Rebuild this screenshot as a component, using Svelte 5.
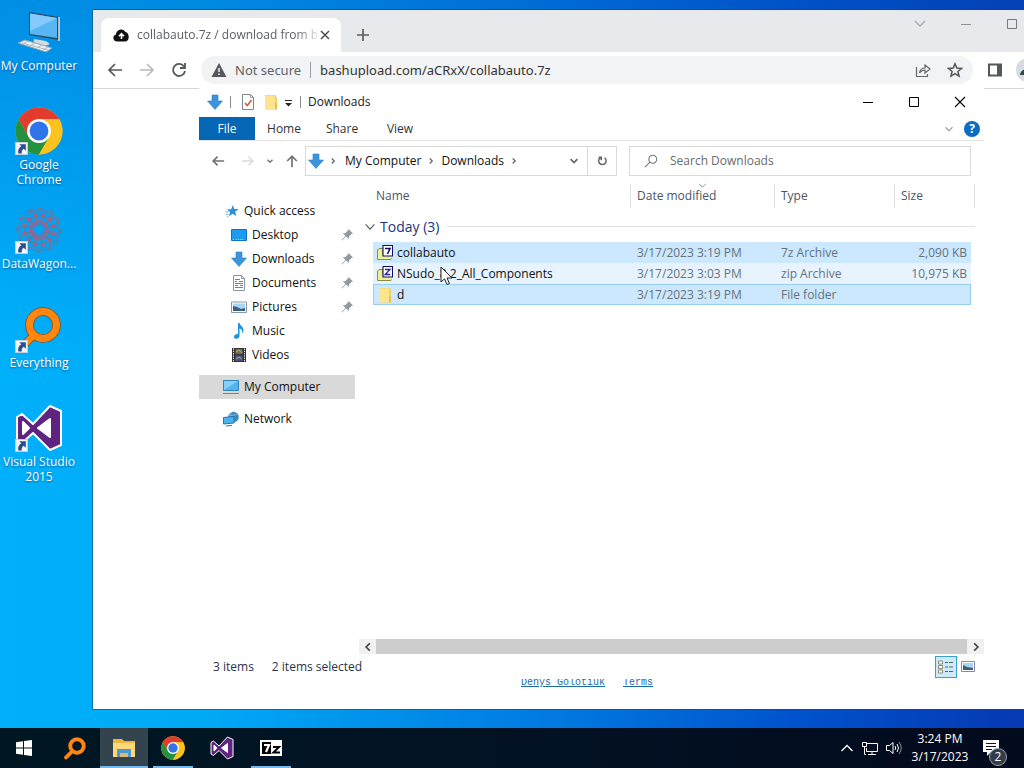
<script>
  const places = [
    { name: 'Desktop', icon: 'desktop', pinned: true },
    { name: 'Downloads', icon: 'down', pinned: true },
    { name: 'Documents', icon: 'doc', pinned: true },
    { name: 'Pictures', icon: 'picture', pinned: true },
    { name: 'Music', icon: 'music', pinned: false },
    { name: 'Videos', icon: 'video', pinned: false }
  ];
  const files = [
    { name: 'collabauto', icon: 'seven', date: '3/17/2023 3:19 PM', type: '7z Archive', size: '2,090 KB', state: 'selected' },
    { name: 'NSudo_8.2_All_Components', icon: 'zip', date: '3/17/2023 3:03 PM', type: 'zip Archive', size: '10,975 KB', state: 'hover' },
    { name: 'd', icon: 'folder', date: '3/17/2023 3:19 PM', type: 'File folder', size: '', state: 'selected focused' }
  ];
  const shortcuts = [
    { name: 'My Computer', icon: 'bigpc', link: false },
    { name: 'Google Chrome', icon: 'chrome', link: true },
    { name: 'DataWagon...', icon: 'wagon', link: true },
    { name: 'Everything', icon: 'every', link: true },
    { name: 'Visual Studio 2015', icon: 'vs', link: true }
  ];
  const tasks = [
    { name: 'Start', icon: 'start', state: '' },
    { name: 'Everything', icon: 'every', state: '' },
    { name: 'File Explorer', icon: 'explorer', state: 'active' },
    { name: 'Google Chrome', icon: 'chrome', state: 'open' },
    { name: 'Visual Studio', icon: 'vs', state: '' },
    { name: '7-Zip', icon: 'sevenzip', state: 'open' }
  ];
  const petals = [0, 30, 60, 90, 120, 150, 180, 210, 240, 270, 300, 330];
</script>

{#snippet icon(name, size)}
  {#if name === 'down'}
    <svg width={size} height={size} viewBox="0 0 16 16"><path d="M5 1h6v6h4.5L8 15.5.5 7H5z" fill="#3a95dd" stroke="#2b7fc4" stroke-width=".6" /></svg>
  {:else if name === 'folder'}
    <svg width={size} height={size} viewBox="0 0 16 16"><path d="M2 1h11v2h1v12.500H2z" fill="#f4cf62" /><path d="M3 1.500h9V15H2V1.500z" fill="#ffe48f" /><path d="M12 9l2 1v5.500h-2z" fill="#e9bf4f" /></svg>
  {:else if name === 'chrome'}
    <svg width={size} height={size} viewBox="0 0 48 48">
      <circle cx="24" cy="24" r="23.500" fill="#fcc31e" />
      <path d="M24 24 13.800 29.900 3.650 12.250A23.500 23.500 0 0 1 44.350 12.250L24 12.250z" fill="#e33b2e" />
      <path d="M3.650 12.250 13.800 29.900 24 35.750 34.200 29.900 24 47.500A23.500 23.500 0 0 1 3.650 12.250z" fill="#23913f" />
      <path d="M24 12.250h20.350A23.500 23.500 0 0 1 24 47.500l10.200-17.600z" fill="#fcc31e" />
      <circle cx="24" cy="24" r="12" fill="#fff" /><circle cx="24" cy="24" r="9.400" fill="#2f74e8" />
    </svg>
  {:else if name === 'vs'}
    <svg width={size} height={size} viewBox="0 0 48 48"><path fill-rule="evenodd" d="M2 13 7 10l11 10L35 2l11 5v34l-11 5-17-17L7 39l-5-3z M8 18v12l6-6z M35 15v18L23 24z" fill="#5e2480" stroke="#fff" stroke-width="2" stroke-linejoin="round" /><path d="M8 18v12l6-6zM35 15v18L23 24z" fill="#fff" /></svg>
  {:else if name === 'every'}
    <svg width={size} height={size} viewBox="0 0 48 48"><g fill="none" stroke-linecap="round"><path d="M18 31 6 43" stroke="#8a4b12" stroke-width="8" /><circle cx="28" cy="20" r="13.500" stroke="#8a4b12" stroke-width="8.500" /><path d="M19 30 6 43" stroke="#ff8610" stroke-width="6.500" /><circle cx="28" cy="20" r="13.500" stroke="#ff8610" stroke-width="7" /></g></svg>
  {:else if name === 'wagon'}
    <svg width={size} height={size} viewBox="0 0 48 48"><g fill="none" stroke="#66799f" stroke-width="1.200">
      {#each petals as a}<g transform="rotate({a} 24 24)"><path d="M24 19 19 10l5-8.500 5 8.500zM19 10h10M24 1.500 31 5" /></g>{/each}
      {#each petals as a}<circle cx="24" cy="9" r="1" fill="#c0567c" stroke="#c0567c" transform="rotate({a + 15} 24 24)" /><circle cx="24" cy="15" r=".8" stroke="#b85a83" transform="rotate({a} 24 24)" />{/each}
      <circle cx="24" cy="24" r="7" stroke="#a85f8d" stroke-dasharray="2 1" /></g></svg>
  {:else if name === 'bigpc'}
    <svg width={size} height={size} viewBox="0 0 48 48"><path d="M19 31 31 33l4 3-7 3-10-2z" fill="#cfdce5" /><path d="M14 4 44 9v23L14 27z" fill="#2a4a63" /><path d="M15 5.500 42 10v20L15 26z" fill="#59b6f4" /><path d="M15 5.500 42 10 15 23z" fill="#83cbfb" /><path d="M44 9v24" stroke="#d5e5ee" stroke-width="1.500" /><path d="M3 35 10 32l27 8-6 4z" fill="#eef0f1" stroke="#93a5b2" /><path d="m7 35 26 7M13 33l-5 3M20 35l-5 3M27 37l-5 3M33 39l-5 3" stroke="#b0bcc4" /></svg>
  {:else if name === 'pc'}
    <svg width={size} height={size} viewBox="0 0 16 16"><path d="M.5 1.500h15v10H.5z" fill="#4fb5f0" stroke="#3184b8" /><path d="M1 2h14L1 11z" fill="#85d0fa" /><path d="M0 14.500h16" stroke="#4b8fb8" /></svg>
  {:else if name === 'desktop'}
    <svg width={size} height={size} viewBox="0 0 16 16"><path d="M.5 2.500h15v11H.5z" fill="#1c9bf0" stroke="#0d75c4" /><path d="M2 12.500h2m1 0h8" stroke="#b9e1fb" stroke-dasharray="1 1" /></svg>
  {:else if name === 'doc'}
    <svg width={size} height={size} viewBox="0 0 16 16"><path d="M2.500.5h8l3 3v12h-11z" fill="#fff" stroke="#8a98a3" /><path d="M10.500.5v3h3" fill="none" stroke="#8a98a3" /><path d="M4 4.500h5M4 6.500h2m2 0h4M4 8.500h8M4 10.500h3m2 0h3M4 12.500h8" stroke="#3f8cc9" /></svg>
  {:else if name === 'picture'}
    <svg width={size} height={size} viewBox="0 0 16 16"><path d="M.5 3h15v10.500H.5z" fill="#fff" stroke="#8a98a3" /><path d="M2 4.500h12V12H2z" fill="#a9d7f3" /><path d="M2 12V7l4 1 4 2 4-1v3z" fill="#39607c" /></svg>
  {:else if name === 'music'}
    <svg width={size} height={size} viewBox="0 0 16 16"><path d="M7 0h1.500c.4 3 4 3.500 4 7 0 1.500-.6 2.500-1.300 3.400.5-3-.7-4.400-2.700-5V13c0 1.600-1.500 2.700-3.200 2.700S3 14.800 3 13.400 4.500 11 7 11z" fill="#1c94dd" /></svg>
  {:else if name === 'video'}
    <svg width={size} height={size} viewBox="0 0 16 16"><path d="M1 1h14v14H1z" fill="#333" /><path d="M2.500 1.500v13M13.500 1.500v13" stroke="#eee" stroke-dasharray="1.300 1" /><path d="M4.500 2h7v5h-7z" fill="#6e7454" /><path d="M4.500 8.500h7v5.500h-7z" fill="#49578f" /><path d="m5 5 3-2 3 3M5 12l3-2 3 2" stroke="#b5aa6c" fill="none" /></svg>
  {:else if name === 'network'}
    <svg width={size} height={size} viewBox="0 0 16 16"><circle cx="10.500" cy="6" r="5.300" fill="#3d88bd" /><path d="M9 1c-3 4-2 8 1 10M6 4c3 1 6 0 8-1" fill="none" stroke="#8cc8ec" stroke-width=".8" /><path d="M.5 6.500 11 5.500v6.500l-10.500 1z" fill="#49b2ef" stroke="#2475ad" /><path d="M3 15l6-.5" stroke="#2475ad" /></svg>
  {:else if name === 'star'}
    <svg width={size} height={size} viewBox="0 0 16 16"><path d="m9 1 1.600 4.600 5 .1-4 3.200 1.300 4.900-4.200-2.700L4.500 14l1.400-4.800L2 6.200l5-.3z" fill="#2d8fd8" /><path d="M0 9h4M1 12h3M2 14.500h2" stroke="#62b4ea" /></svg>
  {:else if name === 'seven' || name === 'zip'}
    <svg width={size} height={size} viewBox="0 0 16 16"><path d="M.5 5 2 3.500h4V13l8-.2V14.500H.5z" fill="#e7ec7c" stroke="#8b8c42" /><path d="M4 10h10v4H1V5h3z" fill="#edf19a" /><path d="M6 .5h9.500v10.500H6z" fill="#fff" stroke="#10105e" stroke-width="1.100" />
      {#if name === 'seven'}<path d="M8 3.500h5L10.500 9" fill="none" stroke="#10105e" stroke-width="1.600" />{:else}<path d="M8 3.500h5L8.200 8.500h5" fill="none" stroke="#2222b8" stroke-width="1.300" />{/if}
    </svg>
  {:else if name === 'start'}
    <svg width={size} height={size} viewBox="0 0 24 24"><path d="M4 6.300 11 5.200V11.500H4zM12 5 20 4v7.500h-8zM4 12.500h7v6.300L4 17.800zM12 12.500h8V20l-8-1z" fill="#fff" /></svg>
  {:else if name === 'explorer'}
    <svg width={size} height={size} viewBox="0 0 24 24"><path d="M1 3h9l2 2h11v16H1z" fill="#eeb541" /><path d="M1 7h22v14H1z" fill="#ffd978" /><path d="M5 13h14v8h-3v-4H8v4H5z" fill="#4a9bd4" /><path d="M8 17h8v4H8z" fill="#dcb975" /></svg>
  {:else if name === 'sevenzip'}
    <svg width={size} height={size} viewBox="0 0 24 24"><path d="M1 4h22v16H1z" fill="#fff" /><path d="M3 6h9v12H3z" fill="#000" /><path d="M5 9h5l-3 7" fill="none" stroke="#fff" stroke-width="2.200" /><path d="M14 11h6l-5.500 5.500H21" fill="none" stroke="#000" stroke-width="2" /></svg>
  {/if}
{/snippet}

{#snippet stroke(d, size, color, width)}
  <svg width={size} height={size} viewBox="0 0 16 16" fill="none" stroke={color} stroke-width={width}><path {d} /></svg>
{/snippet}

<div class="desktop">
  <nav class="shortcuts" aria-label="Desktop">
    {#each shortcuts as s}
      <a href="#top" class="shortcut">
        <span class="pic">
          {@render icon(s.icon, 48)}
          {#if s.link}
            <svg class="badge" width="13" height="13" viewBox="0 0 12 12"><path d="M.5.5h11v11H.5z" fill="#f5f7fa" stroke="#c3cfda" /><path d="M4 2h6v6L8 6.300C6.500 7.500 6 8.500 6.300 10.500H3C2.500 7.500 3.500 5.500 5.800 4z" fill="#2c4f93" /></svg>
          {/if}
        </span>
        <span class="label">{s.name}</span>
      </a>
    {/each}
  </nav>

  <section class="browser" aria-label="Browser">
    <header class="tabs">
      <div class="tab">
        <svg width="17" height="17" viewBox="0 0 17 17"><path d="M4.500 14.500C-1 14.500-.5 8 3 7.500 3 3 9.500 0 12.500 5c4 .2 4.500 9.500 0 9.500z" fill="#111" /><path d="M8.500 12V7M6 9.200l2.500-2.500L11 9.200" fill="none" stroke="#fff" stroke-width="1.600" /></svg>
        <span class="tabtext">collabauto.7z / download from b</span>
        <button aria-label="Close tab">{@render stroke('M4 4l8 8M12 4l-8 8', 16, '#4a4d51', 1.5)}</button>
      </div>
      <button class="plus" aria-label="New tab">{@render stroke('M8 2v12M2 8h12', 16, '#5a5d61', 1.7)}</button>
      <div class="controls">
        <button aria-label="Search tabs">{@render stroke('M3 5l5 5 5-5', 16, '#a8a9ac', 1.3)}</button>
        <button aria-label="Minimize">{@render stroke('M3 8.500h10', 16, '#8e9093', 1)}</button>
        <button aria-label="Maximize">{@render stroke('M3.500 3.500h9v9h-9z', 16, '#77797c', 1)}</button>
      </div>
    </header>
    <div class="toolbar">
      <button aria-label="Back">{@render stroke('M15 8H2M8 2L2 8l6 6', 16, '#54575b', 1.7)}</button>
      <button aria-label="Forward">{@render stroke('M1 8h13M8 2l6 6-6 6', 16, '#b9bbbe', 1.7)}</button>
      <button aria-label="Reload">{@render stroke('M13 4.500A6 6 0 1 0 14 9M14 1v5H9', 16, '#54575b', 1.8)}</button>
      <div class="omnibox">
        <svg width="16" height="16" viewBox="0 0 16 16"><path d="M8 1 15.500 15H.5z" fill="#54575b" /><path d="M8 6v4M8 11.500v1.500" stroke="#f1f3f4" stroke-width="1.500" /></svg>
        <span class="secure">Not secure</span>
        <input aria-label="Address" value="bashupload.com/aCRxX/collabauto.7z" />
        <button aria-label="Share">{@render stroke('M1.500 5v9.500h11V12M4.500 11C5 7.500 7 6 10 6V3l5 4-5 4V8C8 8 6 9 4.500 11z', 16, '#64676b', 1.2)}</button>
        <button aria-label="Bookmark">{@render stroke('M8 1.800l1.800 4.300 4.700.4-3.600 3 1.200 4.600L8 11.700l-4.100 2.400 1.200-4.600-3.600-3 4.700-.4z', 16, '#54575b', 1.5)}</button>
      </div>
      <button aria-label="Side panel"><svg width="16" height="16" viewBox="0 0 16 16"><path d="M2 2.500h12v11H2z" fill="none" stroke="#54575b" stroke-width="2" /><path d="M10 2h4v12h-4z" fill="#54575b" /></svg></button>
      <button class="avatar" aria-label="Profile"><svg width="24" height="24" viewBox="0 0 24 24"><circle cx="12" cy="12" r="12" fill="#d3dce0" /><path d="M4 17c0-8 16-8 16 0z" fill="#33474f" /><circle cx="13" cy="8" r="4" fill="#33474f" /></svg></button>
    </div>
    <div class="page">
      <footer><a href="#author">Denys Golotiuk</a><a href="#terms">Terms</a></footer>
    </div>
  </section>

  <section class="explorer" aria-label="Downloads">
    <header class="title">
      {@render icon('down', 16)}
      <i class="sep"></i>
      <svg class="check" width="16" height="16" viewBox="0 0 16 16"><path d="M2.500.5h8l3 3v12h-11z" fill="#fff" stroke="#858585" /><path d="M10.500.5v3h3" fill="none" stroke="#999" /><path d="m5 9 2.300 2.500L11.500 6" fill="none" stroke="#d45b35" stroke-width="1.500" /></svg>
      {@render icon('folder', 16)}
      <svg class="drop" width="9" height="9" viewBox="0 0 9 9"><path d="M1 1.500h7" stroke="#222" /><path d="M1 4h7L4.500 7.500z" fill="#222" /></svg>
      <i class="sep"></i>
      <span>Downloads</span>
      <div class="winbtns">
        <button aria-label="Minimize">{@render stroke('M3 8.500h10', 16, '#000', 1)}</button>
        <button aria-label="Maximize">{@render stroke('M3.500 3.500h9v9h-9z', 16, '#000', 1)}</button>
        <button aria-label="Close">{@render stroke('M3 3l10 10M13 3L3 13', 16, '#000', 1.1)}</button>
      </div>
    </header>
    <div class="ribbon">
      <button class="file">File</button><button>Home</button><button>Share</button><button>View</button>
      <span class="help">
        {@render stroke('M4 6l4 4 4-4', 14, '#a9a9a9', 1.6)}
        <button aria-label="Help">?</button>
      </span>
    </div>
    <div class="addressrow">
      <button aria-label="Back">{@render stroke('M15 8H2.500M7.500 3l-5 5 5 5', 14, '#727272', 1.9)}</button>
      <button class="forward" aria-label="Forward">{@render stroke('M1 8h12.500M8.500 3l5 5-5 5', 14, '#d9d9d9', 1.6)}</button>
      <button class="recent" aria-label="Recent">{@render stroke('M4 6l4 4 4-4', 10, '#777', 2.4)}</button>
      <button aria-label="Up">{@render stroke('M8 15V2.500M2.500 8L8 2.500 13.500 8', 14, '#727272', 1.9)}</button>
      <div class="crumbs">
        {@render icon('down', 16)}
        {@render stroke('M6 4l4 4-4 4', 10, '#666', 2)}
        <a href="#computer">My Computer</a>
        {@render stroke('M6 4l4 4-4 4', 10, '#666', 2)}
        <a href="#downloads">Downloads</a>
        {@render stroke('M6 4l4 4-4 4', 10, '#666', 2)}
        <button class="history" aria-label="Previous locations">{@render stroke('M3.500 5.500L8 10l4.500-4.500', 12, '#666', 2.2)}</button>
        <button class="refresh" aria-label="Refresh">{@render stroke('M11.500 3.800a5 5 0 1 1-6 0M3.500 3h3.500v4', 12, '#666', 2)}</button>
      </div>
      <label class="search">
        {@render stroke('M1 15l5.500-5.500M10 1.500a4.500 4.500 0 1 1 0 9a4.500 4.500 0 1 1 0-9', 14, '#777', 1.2)}
        <input type="search" aria-label="Search" placeholder="Search Downloads" />
      </label>
    </div>
    <div class="body">
      <nav class="tree" aria-label="Folders">
        <a href="#quick" class="root quick">{@render icon('star', 14)}Quick access</a>
        {#each places as p}
          <a href="#place">{@render icon(p.icon, 16)}{p.name}
            {#if p.pinned}<svg class="pin" width="12" height="12" viewBox="0 0 12 12"><path d="M7.500 0 12 4.500l-1.500.5-2.500 2.500L7.500 10 5 7.500 1 11.500.5 11 4.500 7 2 4.500 4.500 4 7 1.500z" fill="#919aa1" /></svg>{/if}
          </a>
        {/each}
        <a href="#computer" class="root current">{@render icon('pc', 16)}My Computer</a>
        <a href="#network" class="root">{@render icon('network', 16)}Network</a>
      </nav>
      <div class="files">
        <table>
          <colgroup><col /><col class="c-date" /><col class="c-type" /><col class="c-size" /></colgroup>
          <thead>
            <tr>
              <th>Name</th>
              <th>Date modified<span class="sort">{@render stroke('M2 5l6 6 6-6', 9, '#8a8a8a', 1.6)}</span></th>
              <th>Type</th><th>Size</th>
            </tr>
          </thead>
          <tbody>
            <tr class="group"><td colspan="4"><div>{@render stroke('M3 5l5 5.500L13 5', 14, '#555', 1.2)}<span>Today (3)</span><hr /></div></td></tr>
            {#each files as f}
              <tr class="row {f.state}">
                <td><div class="name">{@render icon(f.icon, 16)}{f.name}</div></td>
                <td>{f.date}</td><td>{f.type}</td><td class="num">{f.size}</td>
              </tr>
            {/each}
          </tbody>
        </table>
        <div class="scroll">
          <button aria-label="Scroll left">{@render stroke('M10.500 3l-5 5 5 5', 12, '#444', 2.3)}</button>
          <span class="thumb"></span>
          <button aria-label="Scroll right">{@render stroke('M5.500 3l5 5-5 5', 12, '#444', 2.3)}</button>
        </div>
      </div>
    </div>
    <footer class="status">
      <span>3 items</span><span>2 items selected</span>
      <div class="views">
        <button class="on" aria-label="Details"><svg width="18" height="14" viewBox="0 0 18 14"><path d="M1.500 1h4v3h-4zM1.500 5.500h4v3h-4zM1.500 10h4v3h-4z" fill="#fff" stroke="#8a8f78" /><path d="M8 2.500h3m1 0h4M8 7h3m1 0h4M8 11.500h3m1 0h4" stroke="#51636d" /></svg></button>
        <button aria-label="Thumbnails"><svg width="14" height="12" viewBox="0 0 14 12"><path d="M.5.5h13v10H.5z" fill="#fff" stroke="#8387ad" /><path d="M2 2h10v7H2z" fill="#a9d4f0" /><path d="m2 9V4l4 2 6 1v2z" fill="#3f5d73" /></svg></button>
      </div>
    </footer>
  </section>

  <svg class="cursor" width="13" height="20" viewBox="0 0 13 20"><path d="M1 1v15l3.500-3.200L7 18.500l2.500-1L7 12h5z" fill="#fff" stroke="#222" /></svg>

  <footer class="taskbar">
    {#each tasks as t}
      <button class="task {t.state}" aria-label={t.name}>{@render icon(t.icon, 24)}</button>
    {/each}
    <div class="tray">
      {@render stroke('M2.500 11L8 5.500l5.500 5.500', 16, '#fff', 1.3)}
      <svg width="18" height="16" viewBox="0 0 18 16" fill="none" stroke="#fff"><path d="M6 3.500h10.500v8H5.500V8M11 11.500v3M7 14.500h8M1.500 2.500h4v4h-4zM3.500 6.500v8H5" /></svg>
      <svg width="18" height="16" viewBox="0 0 18 16" fill="none" stroke="#fff"><path d="M1.500 5.500h3L8 2.500v11l-3.500-3h-3z" /><path d="M10 6q1.500 2 0 4M12 4q3 4 0 8" /><path d="M14 2q4.500 6 0 12" stroke="#8b929c" /></svg>
      <time><span>3:24 PM</span><span>3/17/2023</span></time>
      <button class="notes" aria-label="Notifications">
        <svg width="18" height="18" viewBox="0 0 18 18"><path d="M1 1h16v12H9l-4 4v-4H1z" fill="#fff" /><path d="M4 4.500h10M4 7.500h10M4 10.500h6" stroke="#0a1322" /></svg>
        <span class="count">2</span>
      </button>
    </div>
  </footer>
</div>

<style>
  :global(body) { margin: 0; }
  .desktop {
    position: relative; min-height: 100vh; overflow: hidden; display: flex; flex-direction: column;
    font: 12px/16px "Open Sans", "Noto Sans", sans-serif; color: #1a1a1a;
    background: linear-gradient(90deg, #00b0fb 0, #00a9f6 20%, #0078e0 55%, #0052cc 78%, #0639b2 100%);
  }
  .desktop::before { content: ""; position: absolute; inset: 0; background: linear-gradient(rgba(0, 80, 190, .35), transparent 45%); }
  button, input { font: inherit; color: inherit; background: none; border: 0; padding: 0; margin: 0; }
  button { display: flex; align-items: center; justify-content: center; }
  a { color: inherit; text-decoration: none; }
  svg { flex: none; display: block; }

  .shortcuts { position: relative; flex: 1; width: 78px; display: flex; flex-direction: column; padding-top: 8px; }
  .shortcut { display: flex; flex-direction: column; align-items: center; gap: 2px; min-height: 99px; color: #fff; line-height: 15px; text-align: center; }
  .shortcut .label { width: 78px; text-shadow: 0 1px 2px rgba(0, 40, 90, .6); }
  .pic { position: relative; height: 48px; }
  .badge { position: absolute; left: 0; bottom: 0; }

  .browser { position: absolute; left: 93px; right: -57px; top: 10px; bottom: 59px; display: flex; flex-direction: column; background: #fff; box-shadow: 0 0 0 1px rgba(20, 70, 110, .6); font-size: 13px; }
  .tabs { display: flex; align-items: flex-end; height: 42px; background: #e7e9ec; }
  .tab { display: flex; align-items: center; gap: 7px; box-sizing: border-box; width: 240px; height: 34px; margin-left: 8px; padding: 0 8px 0 12px; background: #fff; border-radius: 8px 8px 0 0; }
  .tabtext { flex: 1; min-width: 0; margin-right: -7px; white-space: nowrap; color: #5b5e62; font-size: 12px; mask-image: linear-gradient(90deg, #000 88%, rgba(0, 0, 0, .2)); }
  .plus { width: 28px; height: 34px; margin-left: 8px; }
  .controls { display: flex; gap: 30px; margin-left: auto; padding: 0 61px 20px 0; }
  .toolbar { display: flex; align-items: center; gap: 16px; height: 36px; padding: 0 41px 0 14px; border-bottom: 1px solid #d4d5d7; font-family: "Noto Sans", sans-serif; }
  .omnibox { flex: 1; display: flex; align-items: center; height: 28px; margin: 0 -2px; padding: 0 10px; border-radius: 14px; background: #f1f3f4; }
  .secure { margin-left: 8px; padding-right: 9px; border-right: 1px solid #9a9da1; color: #5f6368; }
  .omnibox input { flex: 1; min-width: 0; margin-left: 9px; color: #333; }
  .omnibox button { margin-left: 16px; }
  .avatar { margin-left: -3px; }
  .page { flex: 1; display: flex; align-items: flex-end; justify-content: center; }
  .page footer { display: flex; gap: 18px; padding-bottom: 20px; font: 10px/12px "Liberation Mono", monospace; color: #1b6f9f; }
  .page a { text-decoration: underline; }

  .explorer { position: absolute; left: 199px; right: 40px; top: 88px; bottom: 89px; display: flex; flex-direction: column; background: #fff; }
  .title { display: flex; align-items: center; gap: 7px; height: 28px; padding-left: 8px; }
  .sep { width: 1px; height: 12px; background: #8a8a8a; }
  .check { margin-left: 2px; }
  .title .drop { margin: 2px 0 0 -2px; }
  .winbtns { display: flex; gap: 30px; margin-left: auto; padding-right: 16px; }
  .winbtns button { width: 16px; height: 16px; }
  .ribbon { display: flex; height: 23px; padding-top: 1px; border-bottom: 1px solid #e4e4e4; color: #333; }
  .ribbon > button { width: 58px; padding-top: 1px; }
  .ribbon .file { width: 56px; background: #0566b5; color: #fff; }
  .help { display: flex; align-items: center; gap: 8px; margin-left: auto; padding-right: 4px; }
  .help button { width: 16px; height: 16px; border-radius: 50%; background: #0b6cc0; color: #fff; font-weight: 700; }
  .addressrow { display: flex; align-items: center; height: 40px; padding: 0 13px 0 12px; gap: 8px; }
  .addressrow > button { width: 14px; }
  .addressrow .forward { margin-left: 8px; }
  .addressrow .recent { width: 16px; margin: 0 -1px; }
  .crumbs { display: flex; align-items: center; gap: 5px; width: 308px; height: 28px; padding-left: 2px; border: 1px solid #d9d9d9; color: #111; margin-left: -2px; }
  .crumbs svg + svg { margin: 0 2px 0 -1px; }
  .history { margin-left: auto; width: 16px; }
  .refresh { width: 29px; height: 28px; border-left: 1px solid #d9d9d9; }
  .search { flex: 1; display: flex; align-items: center; gap: 12px; height: 28px; margin-left: 4px; padding-left: 14px; border: 1px solid #d9d9d9; color: #666; }
  .search input { flex: 1; min-width: 0; outline: 0; }
  .search input::placeholder { color: #6b6b6b; opacity: 1; }

  .body { flex: 1; display: flex; }
  .tree { width: 156px; padding-top: 18px; color: #111; }
  .tree a { display: flex; align-items: center; gap: 5px; height: 24px; padding: 0 2px 0 32px; }
  .tree .root { padding-left: 24px; }
  .tree .quick { padding-left: 26px; }
  .pin { margin-left: auto; }
  .tree .current { margin: 8px 0; background: #d9d9d9; }
  .files { flex: 1; display: flex; flex-direction: column; justify-content: space-between; margin-left: 4px; }
  table { width: calc(100% - 23px); margin: 3px 9px 0 14px; border-spacing: 0; table-layout: fixed; }
  .c-date { width: 144px; }
  .c-type { width: 120px; }
  .c-size { width: 80px; }
  th { position: relative; height: 24px; padding: 0 6px; border-right: 1px solid #e2e2e2; text-align: left; font-weight: 400; color: #4c5567; }
  th:first-child { padding-left: 3px; }
  .sort { position: absolute; left: 67px; top: -3px; }
  td { height: 21px; padding: 0 6px; color: #64727d; white-space: nowrap; }
  .group td { height: 34px; padding: 0; }
  .group div { display: flex; align-items: center; gap: 3px; margin-left: -10px; padding-top: 3px; font-size: 14px; line-height: 20px; color: #1f3377; }
  hr { flex: 1; margin: 0 0 0 5px; border: 0; border-top: 1px solid #dedede; }
  .name { display: flex; align-items: center; gap: 4px; color: #111; }
  .row td:first-child { padding-left: 4px; }
  .row td:last-child { border-right: 4px solid transparent; background-clip: padding-box; padding-right: 4px; }
  .num { text-align: right; }
  .selected td { background-color: #cce8ff; }
  .hover td { background-color: #e7f4ff; }
  .focused td { box-shadow: inset 0 1px #99cdf0, inset 0 -1px #99cdf0; }
  .focused td:first-child { box-shadow: inset 0 1px #99cdf0, inset 0 -1px #99cdf0, inset 1px 0 #99cdf0; }
  .focused td:last-child { box-shadow: inset 0 1px #99cdf0, inset 0 -1px #99cdf0, inset -1px 0 #99cdf0; }
  .scroll { display: flex; height: 15px; background: #f1f1f1; }
  .scroll button { width: 17px; }
  .thumb { flex: 1; background: #cdcdcd; }
  .status { display: flex; align-items: center; gap: 18px; height: 25px; padding-left: 14px; color: #26334d; }
  .views { display: flex; gap: 4px; margin-left: auto; padding-right: 9px; }
  .views .on { width: 22px; height: 22px; background: #cdeafb; border: 1px solid #3ba0d0; }

  .cursor { position: absolute; left: 440px; top: 266px; }

  .taskbar { position: relative; display: flex; height: 40px; background: linear-gradient(90deg, #001722, #021224 50%, #020a1d); color: #fff; }
  .task { width: 48px; border-bottom: 2px solid transparent; margin-right: 1px; padding-top: 2px; }
  .task:first-child { margin-right: 3px; }
  .task.active { background: #33444e; border-color: #76b9ed; }
  .task.open { width: 40px; margin: 0 5px 0 4px; border-color: #76b9ed; }
  .tray { display: flex; align-items: center; gap: 6px; margin-left: auto; padding-right: 20px; }
  time { display: flex; flex-direction: column; width: 56px; margin-left: 3px; align-items: center; line-height: 18px; }
  .notes { position: relative; width: 26px; height: 30px; margin-left: 4px; }
  .count { position: absolute; right: -3px; bottom: -3px; width: 18px; height: 18px; border-radius: 50%; background: #333c48; border: 1px solid #9aa1aa; box-sizing: border-box; font-size: 12px; line-height: 16px; }
</style>
